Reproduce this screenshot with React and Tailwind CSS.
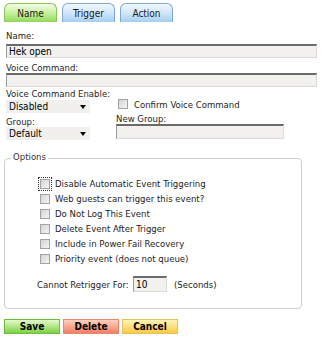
function Tab({ green, children }) {
  return (
    <div
      className={
        "w-[53px] h-[19px] rounded-t-[6px] border border-b-0 flex items-center justify-center text-[10px] text-[#1a1a1a] bg-gradient-to-b " +
        (green
          ? "border-[#86c456] from-[#f4fde9] via-[#c6f09c] to-[#92d85a]"
          : "border-[#7fa9cf] from-[#f3f9ff] via-[#cfe6fa] to-[#a6cff2]")
      }
    >
      {children}
    </div>
  );
}

function TextInput({ className = "", value = "" }) {
  return (
    <div
      className={
        "bg-[#f2f1ed] border-t-2 border-t-[#6a6a6a] border-l border-l-[#9a9a9a] border-r border-r-[#dadada] border-b border-b-[#dadada] pl-[2px] flex items-center text-[10px] leading-[11px] text-black " +
        className
      }
    >
      {value}
    </div>
  );
}

function Select({ className = "", value }) {
  return (
    <div
      className={
        "w-[84px] h-[13px] bg-[#f1f0ec] flex items-center justify-between pl-[3px] pr-[4px] text-[10px] text-black " +
        className
      }
    >
      <span>{value}</span>
      <svg width="6" height="4" viewBox="0 0 6 4">
        <polygon points="0,0 6,0 3,4" fill="#000" />
      </svg>
    </div>
  );
}

function Box({ focus }) {
  const box = (
    <div className="w-[10px] h-[10px] border border-[#a3a3a3] bg-gradient-to-br from-[#d4d4d4] to-[#f5f5f5]" />
  );
  if (focus) {
    return (
      <div className="border border-dotted border-[#333] p-[1px] -m-[2px]">{box}</div>
    );
  }
  return box;
}

function Btn({ color, children }) {
  const c = {
    green: "border-[#6cbf3a] from-[#e4fac8] to-[#7bd13b]",
    red: "border-[#e08a70] from-[#ffd0bf] to-[#f37e60]",
    yellow: "border-[#e6c155] from-[#fff3b4] to-[#fbc940]",
  }[color];
  return (
    <div
      className={
        "w-[56px] h-[15px] border bg-gradient-to-b flex items-center justify-center font-bold text-[10px] text-black " +
        c
      }
    >
      {children}
    </div>
  );
}

export default function App() {
  const opts = [
    "Disable Automatic Event Triggering",
    "Web guests can trigger this event?",
    "Do Not Log This Event",
    "Delete Event After Trigger",
    "Include in Power Fail Recovery",
    "Priority event (does not queue)",
  ];
  return (
    <div className="w-[336px] h-[340px] overflow-hidden bg-white text-[#1e1e1e] font-['DejaVu_Sans_Condensed','Liberation_Sans',sans-serif] text-[9.5px] leading-[11px] pt-[3px]">
      <div className="flex gap-[5px] pl-[4px] h-[19px]">
        <Tab green>Name</Tab>
        <Tab>Trigger</Tab>
        <Tab>Action</Tab>
      </div>
      <div className="px-[6px]">
        <div className="mt-[8px] h-[11px]">Name:</div>
        <TextInput className="mt-[3px] w-[311px] h-[14px]" value="Hek open" />
        <div className="mt-[4px] h-[11px]">Voice Command:</div>
        <TextInput className="w-[311px] h-[14px]" />
        <div className="flex">
          <div className="w-[110px]">
            <div className="mt-[1px] h-[11px] whitespace-nowrap">Voice Command Enable:</div>
            <Select className="mt-[1px]" value="Disabled" />
            <div className="mt-[3px] h-[11px]">Group:</div>
            <Select value="Default" />
          </div>
          <div>
            <div className="mt-[12px] flex items-center h-[10px] pl-[2px] gap-[6px] whitespace-nowrap">
              <Box />
              <span>Confirm Voice Command</span>
            </div>
            <div className="mt-[4px] h-[11px]">New Group:</div>
            <TextInput className="w-[168px] h-[15px]" />
          </div>
        </div>
        <fieldset className="-ml-[2px] w-[298px] mt-[11px] border border-[#cfcfcf] rounded-[4px] pb-[16px]">
          <legend className="ml-[6px] px-[2px] pb-[3px] h-[14px] text-[#333]">Options</legend>
          <div className="pt-[11px] pl-[35px]">
            {opts.map((o, i) => (
              <div key={o} className="h-[15px] flex items-center gap-[5px] whitespace-nowrap">
                <Box focus={i === 0} />
                <span>{o}</span>
              </div>
            ))}
          </div>
          <div className="mt-[10px] pl-[32px] h-[16px] flex items-center">
            <span className="w-[96px] whitespace-nowrap">Cannot Retrigger For:</span>
            <TextInput className="w-[34px] h-[16px]" value="10" />
            <span className="ml-[7px]">(Seconds)</span>
          </div>
        </fieldset>
      </div>
      <div className="mt-[10px] pl-[4px] flex gap-[3px]">
        <Btn color="green">Save</Btn>
        <Btn color="red">Delete</Btn>
        <Btn color="yellow">Cancel</Btn>
      </div>
    </div>
  );
}
